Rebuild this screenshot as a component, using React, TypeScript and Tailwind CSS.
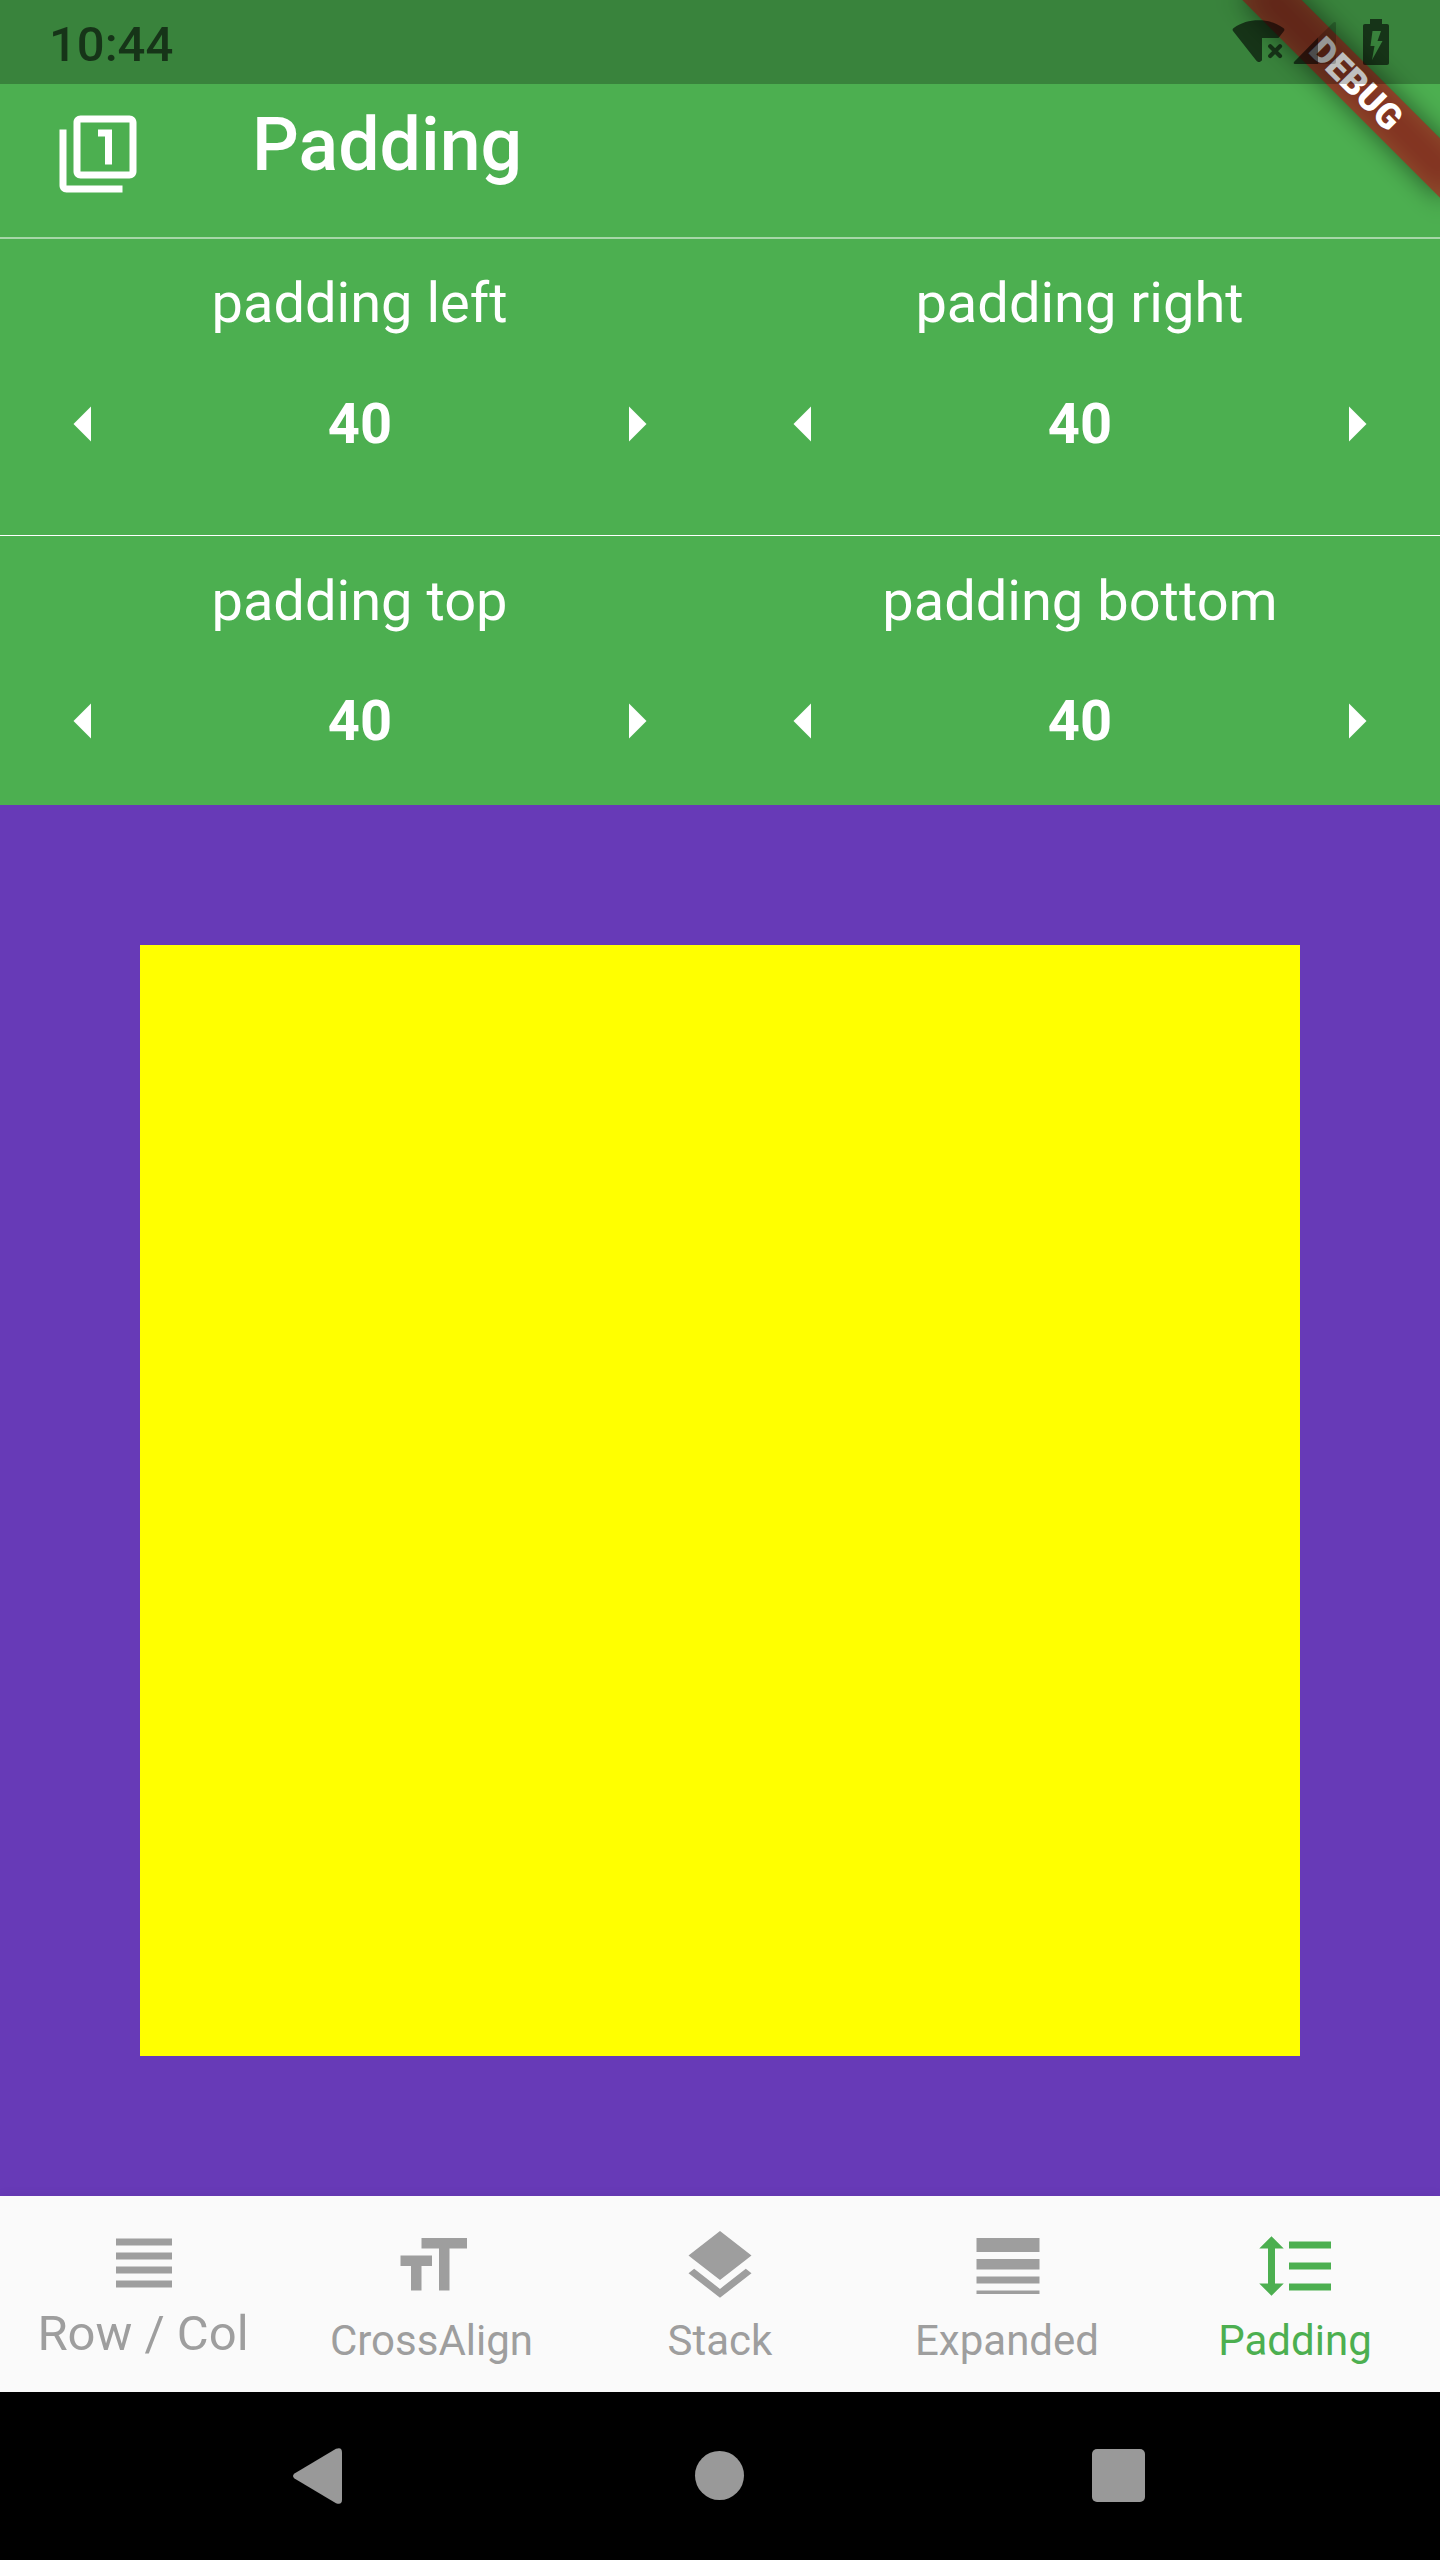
import { useState } from "react";

type IconProps = { path: string; className?: string };

const Icon = ({ path, className = "" }: IconProps) => (
  <svg viewBox="0 0 24 24" fill="currentColor" className={`h-[84px] w-[84px] shrink-0 ${className}`}>
    <path d={path} />
  </svg>
);

const PATHS = {
  filter1:
    "M3 5H1v16c0 1.1.9 2 2 2h16v-2H3V5zm11 10h2V5h-4v2h2v8zm7-14H7c-1.1 0-2 .9-2 2v14c0 1.1.9 2 2 2h14c1.1 0 2-.9 2-2V3c0-1.1-.9-2-2-2zm0 16H7V3h14v14z",
  arrowLeft: "M14 7l-5 5 5 5V7z",
  arrowRight: "M10 17l5-5-5-5v10z",
  headline: "M4 15h16v-2H4v2zm0 4h16v-2H4v2zm0-8h16V9H4v2zm0-6v2h16V5H4z",
  formatSize: "M9 4v3h5v12h3V7h5V4H9zm-6 8h3v7h3v-7h3V9H3v3z",
  layers:
    "M11.99 18.54l-7.37-5.73L3 14.07l9 7 9-7-1.63-1.27-7.38 5.74zM12 16l7.36-5.73L21 9l-9-7-9 7 1.63 1.27L12 16z",
  lineWeight: "M3 17h18v-2H3v2zm0 3h18v-1H3v1zm0-7h18v-3H3v3zm0-9v4h18V4H3z",
  lineSpacing:
    "M6 7h2.5L5 3.5 1.5 7H4v10H1.5L5 20.5 8.5 17H6V7zm4-2v2h12V5H10zm0 14h12v-2H10v2zm0-6h12v-2H10v2z",
};

function StatusBar() {
  return (
    <div className="relative z-20 flex h-[84px] items-start justify-between bg-black/25 pl-[49px] pr-[51px] text-black/60">
      <span className="pt-[17px] text-[49px] leading-[56px] font-medium">10:44</span>
      <div className="flex items-start pt-[19px]">
        <svg viewBox="0 0 54 46" className="h-[46px] w-[54px]" fill="currentColor">
          <path d="M1.200 12.200C.2 11 .4 9.800 1.700 9 9.300 3.700 17.500 1.300 26.500 1.300s17.500 2.400 24.800 7.700c1.300.8 1.500 2 .5 3.200L46.500 19H30v22.300c-1.800 2.400-4.300 2.400-6 0Z" />
          <path d="M38.200 27.200l9.800 9.800m0-9.800L38.200 37" stroke="currentColor" strokeWidth="4.200" strokeLinecap="round" />
        </svg>
        <svg viewBox="0 0 44 46" className="ml-[7px] h-[46px] w-[44px]" fill="currentColor">
          <path d="M1.800 45C.6 45 .3 43.700 1.200 42.800L25 18.500V45Z" />
          <path d="M25 18.500 40.400 3.600c1-1 2.600-.6 2.600.9V43c0 1.300-.7 2-2 2H25Z" opacity=".35" />
        </svg>
        <svg viewBox="0 0 26 46" className="ml-[26px] h-[46px] w-[26px]" fill="currentColor">
          <path
            fillRule="evenodd"
            d="M7 0h12v5h5c1.300 0 2 .7 2 2v37c0 1.300-.7 2-2 2H2c-1.300 0-2-.7-2-2V7c0-1.300.7-2 2-2h5ZM9.500 12 7.500 27h4L9 41l10.500-19h-5L18 12Z"
          />
        </svg>
      </div>
    </div>
  );
}

function DebugBanner() {
  return (
    <div className="pointer-events-none absolute top-0 right-0 z-10 h-[320px] w-[320px] overflow-hidden">
      <div className="absolute top-[63px] left-[96px] h-[42px] w-[280px] rotate-45 bg-black/50 blur-[12.6px]" />
      <div className="absolute top-[63px] left-[96px] flex h-[42px] w-[280px] rotate-45 items-center justify-center bg-[#b71c1c]/63 text-[35.7px] leading-[36px] font-black text-white">
        DEBUG
      </div>
    </div>
  );
}

type StepperProps = {
  label: string;
  labelClass: string;
  valueClass: string;
  value: number;
  onChange: (v: number) => void;
};

function Stepper({ label, labelClass, valueClass, value, onChange }: StepperProps) {
  return (
    <div className="flex w-1/2 flex-col">
      <div className={`text-center text-[56px] leading-[64px] ${labelClass}`}>{label}</div>
      <div className={`flex items-center justify-between px-[42px] ${valueClass}`}>
        <button onClick={() => onChange(value - 1)}>
          <Icon path={PATHS.arrowLeft} />
        </button>
        <span className="text-[56px] leading-[64px] font-bold">{value}</span>
        <button onClick={() => onChange(value + 1)}>
          <Icon path={PATHS.arrowRight} />
        </button>
      </div>
    </div>
  );
}

const SMALL = "mt-[8px] text-[42px] leading-[50px]";
const TABS = [
  { label: "Row / Col", path: PATHS.headline, tab: "pt-[24.5px] text-[#9e9e9e]", text: "mt-[1.5px] pr-[2px] text-[49px] leading-[56px]" },
  { label: "CrossAlign", path: PATHS.formatSize, tab: "pt-[28px] text-[#9e9e9e]", text: `${SMALL} pr-[1px]` },
  { label: "Stack", path: PATHS.layers, tab: "pt-[28px] text-[#9e9e9e]", text: SMALL },
  { label: "Expanded", path: PATHS.lineWeight, tab: "pt-[28px] text-[#9e9e9e]", text: `${SMALL} pr-[2px]` },
  { label: "Padding", path: PATHS.lineSpacing, tab: "pt-[28px] text-[#4caf50]", text: `${SMALL} pr-[2px]` },
];

export default function App() {
  const [pad, setPad] = useState({ left: 40, right: 40, top: 40, bottom: 40 });
  const set = (key: keyof typeof pad) => (v: number) => setPad({ ...pad, [key]: Math.max(0, v) });
  const px = (v: number) => `${v * 3.5}px`;

  return (
    <div className="relative flex h-[2560px] w-[1440px] flex-col overflow-hidden bg-black font-['Roboto',sans-serif]">
      <DebugBanner />
      <div className="flex h-[805px] flex-col bg-[#4caf50] text-white">
        <StatusBar />
        <header className="flex h-[153px] items-start pt-[28px] pl-[56px]">
          <Icon path={PATHS.filter1} />
          <h1 className="ml-[112px] -mt-[10px] text-[73.5px] leading-[86px] font-medium">Padding</h1>
        </header>
        <div className="flex h-[298px] border-t-2 border-white/50">
          <Stepper label="padding left" labelClass="pt-[32px] pr-[1px]" valueClass="pt-[47px]" value={pad.left} onChange={set("left")} />
          <Stepper label="padding right" labelClass="pt-[32px] pr-[1px]" valueClass="pt-[47px]" value={pad.right} onChange={set("right")} />
        </div>
        <div className="flex h-[270px] border-t border-white">
          <Stepper label="padding top" labelClass="pt-[33px] pr-[1px]" valueClass="pt-[46px]" value={pad.top} onChange={set("top")} />
          <Stepper label="padding bottom" labelClass="pt-[33px]" valueClass="pt-[46px]" value={pad.bottom} onChange={set("bottom")} />
        </div>
      </div>

      <main
        className="flex h-[1391px] bg-[#673ab7]"
        style={{
          paddingLeft: px(pad.left),
          paddingRight: px(pad.right),
          paddingTop: px(pad.top),
          paddingBottom: px(pad.bottom),
        }}
      >
        <div className="flex-1 bg-[#ffff00]" />
      </main>

      <nav className="relative flex h-[196px] bg-[#fafafa] shadow-[0_0_12px_rgba(0,0,0,0.06)]">
        {TABS.map((tab) => (
          <button key={tab.label} className={`flex w-[288px] flex-col items-center ${tab.tab}`}>
            <Icon path={tab.path} />
            <span className={`whitespace-nowrap ${tab.text}`}>{tab.label}</span>
          </button>
        ))}
      </nav>

      <div className="relative flex h-[168px] items-start bg-black pt-[56px] pl-[293px] text-[#999999]">
        <svg viewBox="0 0 49 56" className="h-[56px] w-[49px]" fill="currentColor">
          <path d="M1.500 25.500 43 .8Q49-1.500 49 4.500V51.500Q49 57.500 43 55.200L1.500 30.500Q-1.500 28 1.500 25.500Z" />
        </svg>
        <div className="mt-[3px] ml-[353px] h-[49px] w-[49px] rounded-full bg-current" />
        <div className="mt-px ml-[347.500px] h-[53px] w-[53px] rounded-[5px] bg-current" />
      </div>
    </div>
  );
}
